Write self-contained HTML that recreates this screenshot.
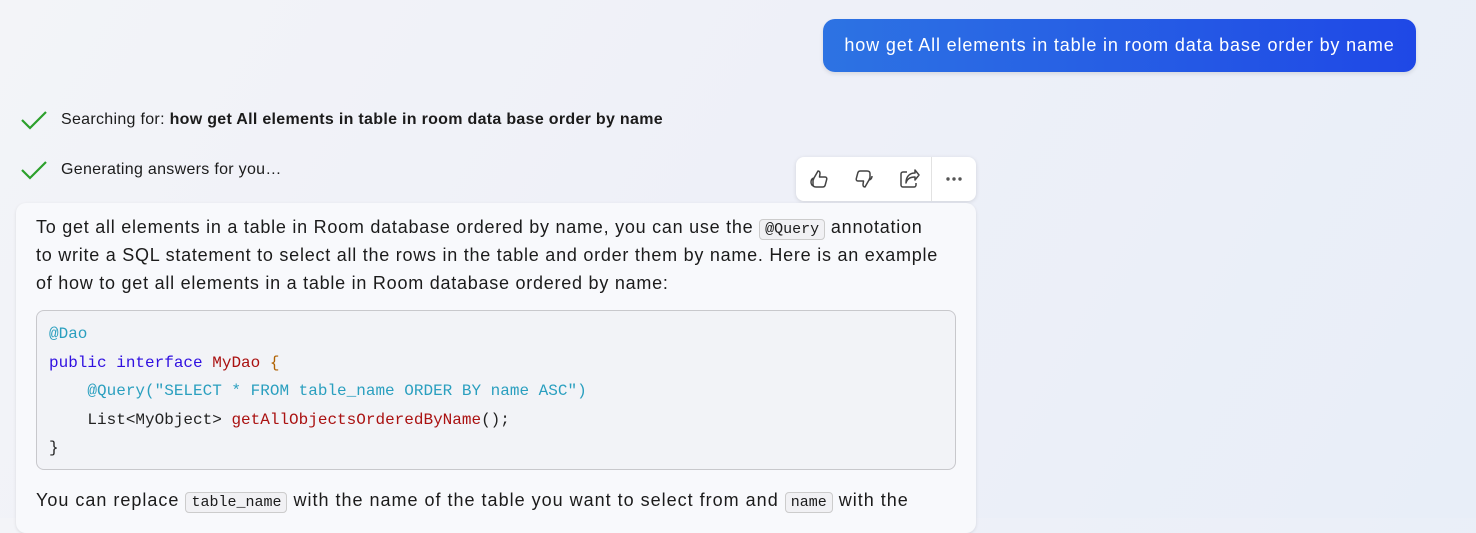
<!DOCTYPE html>
<html><head><style>
body{margin:0;width:1476px;height:518px;overflow:hidden;background:linear-gradient(120deg,#f3f4f8 0%,#eef0f8 50%,#e8eef8 100%);font-family:"Liberation Sans",sans-serif;color:#111;position:relative}
.bubble{position:absolute;left:823px;top:19px;width:593px;height:53px;border-radius:12px;background:linear-gradient(90deg,#2d73e3,#1f48e6);color:#fff;font-size:18px;letter-spacing:0.85px;line-height:53px;text-align:center;box-shadow:0 2px 4px rgba(0,0,0,.1)}
.status{position:absolute;left:20px;font-size:16px;letter-spacing:0.3px;color:#1b1b1b}
.status svg{position:absolute;left:0;top:-2px}
.status span{position:absolute;left:41px;white-space:nowrap}
.bar{position:absolute;left:796px;top:157px;width:180px;height:44px;background:#fff;border-radius:8px;box-shadow:0 1px 4px rgba(0,0,0,.12)}
.bar svg{position:absolute}
.card{position:absolute;left:16px;top:203px;width:960px;height:330px;background:#f8f9fc;border-radius:10px;box-shadow:0 1px 3px rgba(0,0,0,.1)}
.p{position:absolute;left:20px;width:940px;font-size:18px;letter-spacing:0.75px;line-height:28px;color:#1b1b1b;white-space:nowrap}
code{font-family:"Liberation Mono",monospace;font-size:15px;letter-spacing:0;background:#f1f1f4;border:1px solid #ccc;border-radius:4px;padding:1px 5px;line-height:18px}
.code{position:absolute;left:20px;top:107px;width:920px;height:160px;border:1px solid #c8c8cc;border-radius:8px;background:#f2f3f7;font-family:"Liberation Mono",monospace;font-size:16px;line-height:28.5px;padding:9px 12px;box-sizing:border-box;white-space:pre;color:#222}
.a{color:#2a9fbf}.k{color:#3010e0}.t{color:#a11}.b{color:#b06000}
</style></head><body>
<div class="bubble">how get All elements in table in room data base order by name</div>
<div class="status" style="top:111px"><svg width="28" height="22" viewBox="0 0 28 22"><path d="M2 11l8 8L26 3" fill="none" stroke="#2ca02c" stroke-width="2.2"/></svg><span>Searching for: <b>how get All elements in table in room data base order by name</b></span></div>
<div class="status" style="top:161px"><svg width="28" height="22" viewBox="0 0 28 22"><path d="M2 11l8 8L26 3" fill="none" stroke="#2ca02c" stroke-width="2.2"/></svg><span>Generating answers for you…</span></div>
<div class="bar">
<svg style="left:11px;top:10px" width="24" height="24" viewBox="0 0 24 24"><path d="M7 11l4-7c1.5 0 2 1 2 2.5L12.5 10H18c1.5 0 2 1.2 1.7 2.4l-1.6 6c-.4 1.2-1.3 1.6-2.5 1.6H9c-2 0-3-1-3-2.5v-4L7 11zM7 11c-2 .5-3 2-3 4s1 4 3 4" fill="none" stroke="#444" stroke-width="1.5" stroke-linejoin="round"/></svg>
<svg style="left:56px;top:10px" width="24" height="24" viewBox="0 0 24 24"><path d="M17 13l-4 7c-1.5 0-2-1-2-2.5l.5-3.5H6c-1.5 0-2-1.2-1.7-2.4l1.6-6C6.3 4.4 7.2 4 8.4 4H15c2 0 3 1 3 2.5v4L17 13zm0 0c2-.5 3-2 3-4" fill="none" stroke="#444" stroke-width="1.5" stroke-linejoin="round"/></svg>
<svg style="left:101px;top:10px" width="24" height="24" viewBox="0 0 24 24"><path d="M10 5H6a2 2 0 0 0-2 2v11a2 2 0 0 0 2 2h11a2 2 0 0 0 2-2v-2M9 16c1-4 4-6 9-6v3l4-5-4-5v3c-5 0-9 3-9 10z" fill="none" stroke="#444" stroke-width="1.5" stroke-linejoin="round"/></svg>
<div style="position:absolute;left:135px;top:0;width:1px;height:44px;background:#e2e2e2"></div>
<svg style="left:147px;top:12px" width="24" height="20" viewBox="0 0 24 20"><circle cx="5" cy="10" r="1.7" fill="#555"/><circle cx="11" cy="10" r="1.7" fill="#555"/><circle cx="17" cy="10" r="1.7" fill="#555"/></svg>
</div>
<div class="card">
<div class="p" style="top:10px">To get all elements in a table in Room database ordered by name, you can use the <code>@Query</code> annotation<br>to write a SQL statement to select all the rows in the table and order them by name. Here is an example<br>of how to get all elements in a table in Room database ordered by name:</div>
<div class="code"><span class="a">@Dao</span>
<span class="k">public</span> <span class="k">interface</span> <span class="t">MyDao</span> <span class="b">{</span>
    <span class="a">@Query("SELECT * FROM table_name ORDER BY name ASC")</span>
    List&lt;MyObject&gt; <span class="t">getAllObjectsOrderedByName</span>();
}</div>
<div class="p" style="top:283px;letter-spacing:1px">You can replace <code>table_name</code> with the name of the table you want to select from and <code>name</code> with the</div>
</div>
</body></html>
